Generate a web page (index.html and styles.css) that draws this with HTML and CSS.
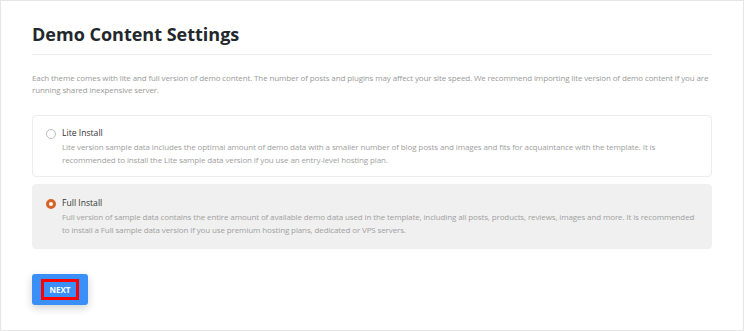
FILE: index.html
```html
<!DOCTYPE html>
<html>
<head>
<meta charset="utf-8">
<link rel="stylesheet" href="styles.css">
</head>
<body>
<div class="page">
  <h1 class="title">Demo Content Settings</h1>
  <p class="intro">Each theme comes with lite and full version of demo content. The number of posts and plugins may affect your site speed. We recommend importing lite version of demo content if you are running shared inexpensive server.</p>
  <div class="options">
    <label class="option">
      <span class="radio"></span>
      <span class="option-body">
        <span class="option-title">Lite Install</span>
        <span class="option-desc">Lite version sample data includes the optimal amount of demo data with a smaller number of blog posts and images and fits for acquaintance with the template. It is recommended to install the Lite sample data version if you use an entry-level hosting plan.</span>
      </span>
    </label>
    <label class="option option-active">
      <span class="radio radio-checked"></span>
      <span class="option-body">
        <span class="option-title">Full Install</span>
        <span class="option-desc">Full version of sample data contains the entire amount of available demo data used in the template, including all posts, products, reviews, images and more. It is recommended to install a Full sample data version if you use premium hosting plans, dedicated or VPS servers.</span>
      </span>
    </label>
  </div>
  <div class="actions">
    <button class="btn"><span class="btn-label">NEXT</span></button>
  </div>
</div>
</body>
</html>
```
FILE: styles.css
```css
html, body {
  margin: 0;
  padding: 0;
  background: #ffffff;
}
body {
  font-family: "Open Sans", "Noto Sans", sans-serif;
}
.page {
  box-sizing: border-box;
  width: 744px;
  height: 331px;
  border: 1px solid #e6e6e6;
  padding: 0 31px 0 31px;
  display: flex;
  flex-direction: column;
}
.title {
  margin: 22px 0 0 0;
  padding: 0 0 8px 0;
  font-size: 18px;
  line-height: 23px;
  font-weight: 700;
  color: #23282d;
  border-bottom: 1px solid #ececec;
}
.intro {
  margin: 17px 0 0 0;
  font-size: 8px;
  line-height: 12px;
  letter-spacing: -0.12px;
  color: #9a9a9a;
}
.options {
  margin-top: 19px;
  display: flex;
  flex-direction: column;
  gap: 7px;
}
.option {
  display: flex;
  align-items: flex-start;
  gap: 6px;
  padding: 11px 12px 10px 13px;
  border: 1px solid #ececec;
  border-radius: 4px;
  background: #ffffff;
}
.option-active {
  background: #f0f0f0;
  border-color: #f0f0f0;
  padding-top: 12px;
  padding-bottom: 12px;
}
.radio {
  box-sizing: border-box;
  flex: none;
  width: 10px;
  height: 10px;
  margin-top: 2px;
  border-radius: 50%;
  border: 1px solid #bdbdbd;
  background: #ffffff;
}
.radio-checked {
  border: 3px solid #d9622b;
  background: #ffffff;
}
.option-body {
  display: flex;
  flex-direction: column;
}
.option-title {
  font-size: 8.6px;
  line-height: 13px;
  color: #333333;
  font-weight: 500;
}
.option-desc {
  margin-top: 1px;
  font-size: 8px;
  line-height: 12.5px;
  letter-spacing: -0.12px;
  color: #a0a0a0;
}
.actions {
  margin-top: 25px;
  display: flex;
}
.btn {
  width: 56px;
  height: 31px;
  border: none;
  border-radius: 3px;
  background: #3a8ff8;
  box-shadow: 0 3px 8px rgba(0, 0, 0, 0.18);
  padding: 0;
  display: flex;
  align-items: center;
  justify-content: center;
  font-family: "Open Sans", "Noto Sans", sans-serif;
}
.btn-label {
  box-sizing: border-box;
  width: 38px;
  height: 21px;
  border: 3px solid #ff0000;
  display: flex;
  align-items: center;
  justify-content: center;
  font-size: 8px;
  font-weight: 700;
  color: #ffffff;
}
```
